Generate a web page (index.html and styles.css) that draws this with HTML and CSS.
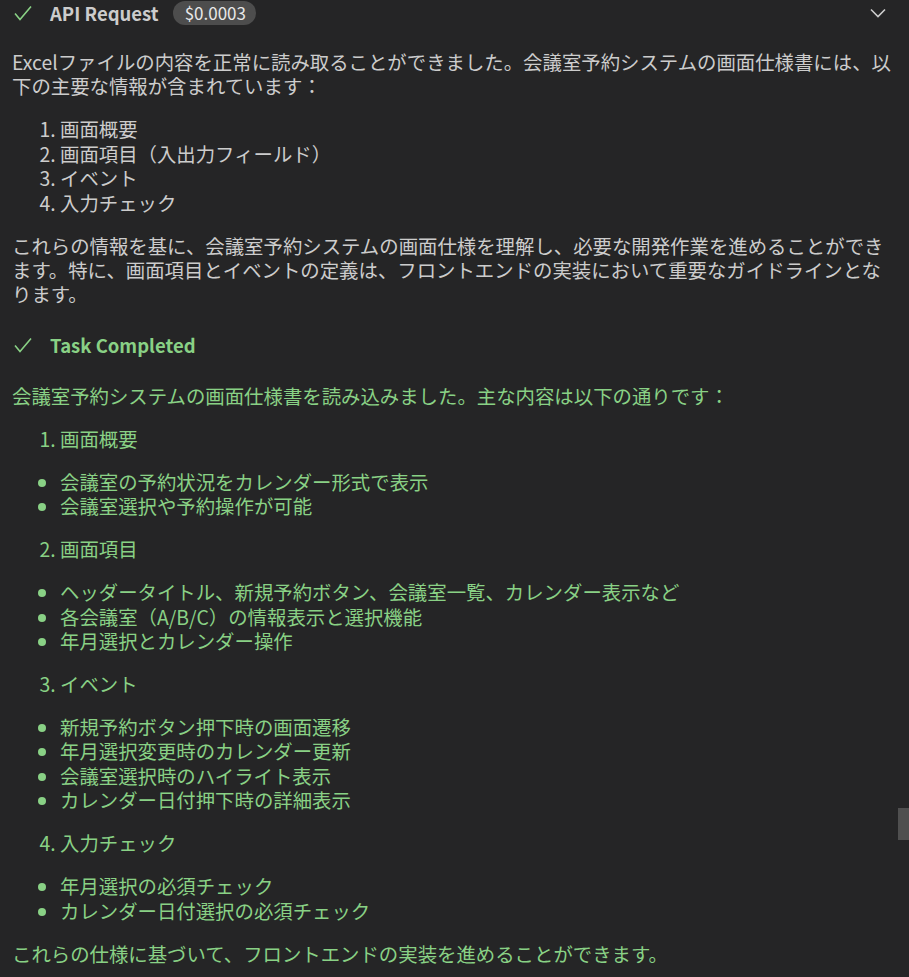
FILE: index.html
```html
<!DOCTYPE html>
<html lang="ja">
<head>
<meta charset="utf-8">
<link rel="stylesheet" href="styles.css">
</head>
<body>
<div class="view">
  <div class="head">
    <svg class="check" viewBox="0 0 18 16" width="18" height="16"><polyline points="1,8.5 6,14.5 17,1.5" fill="none" stroke="#89d185" stroke-width="1.6" stroke-linejoin="miter"/></svg>
    <span class="title">API Request</span>
    <span class="badge">$0.0003</span>
    <svg class="chev" viewBox="0 0 16 10" width="16" height="10"><polyline points="1,1.5 8,8.5 15,1.5" fill="none" stroke="#cccccc" stroke-width="1.6"/></svg>
  </div>
  <div class="md">
    <p>Excelファイルの内容を正常に読み取ることができました。会議室予約システムの画面仕様書には、以下の主要な情報が含まれています：</p>
    <ol>
      <li>画面概要</li>
      <li>画面項目（入出力フィールド）</li>
      <li>イベント</li>
      <li>入力チェック</li>
    </ol>
    <p>これらの情報を基に、会議室予約システムの画面仕様を理解し、必要な開発作業を進めることができます。特に、画面項目とイベントの定義は、フロントエンドの実装において重要なガイドラインとなります。</p>
  </div>
  <div class="head head-done">
    <svg class="check" viewBox="0 0 18 16" width="18" height="16"><polyline points="1,8.5 6,14.5 17,1.5" fill="none" stroke="#89d185" stroke-width="1.6"/></svg>
    <span class="title title-done">Task Completed</span>
  </div>
  <div class="md md-done">
    <p>会議室予約システムの画面仕様書を読み込みました。主な内容は以下の通りです：</p>
    <ol start="1"><li>画面概要</li></ol>
    <ul>
      <li>会議室の予約状況をカレンダー形式で表示</li>
      <li>会議室選択や予約操作が可能</li>
    </ul>
    <ol start="2"><li>画面項目</li></ol>
    <ul>
      <li>ヘッダータイトル、新規予約ボタン、会議室一覧、カレンダー表示など</li>
      <li>各会議室（A/B/C）の情報表示と選択機能</li>
      <li>年月選択とカレンダー操作</li>
    </ul>
    <ol start="3"><li>イベント</li></ol>
    <ul>
      <li>新規予約ボタン押下時の画面遷移</li>
      <li>年月選択変更時のカレンダー更新</li>
      <li>会議室選択時のハイライト表示</li>
      <li>カレンダー日付押下時の詳細表示</li>
    </ul>
    <ol start="4"><li>入力チェック</li></ol>
    <ul>
      <li>年月選択の必須チェック</li>
      <li>カレンダー日付選択の必須チェック</li>
    </ul>
    <p>これらの仕様に基づいて、フロントエンドの実装を進めることができます。</p>
  </div>
  <div class="scroll-thumb"></div>
</div>
</body>
</html>
```
FILE: styles.css
```css
html, body {
  margin: 0;
  padding: 0;
  background: #252526;
}
body {
  width: 909px;
  height: 977px;
  overflow: hidden;
  font-family: "Noto Sans CJK JP", "Noto Sans", sans-serif;
  color: #cccccc;
}
.view {
  position: relative;
  height: 977px;
  padding: 0 11px 0 12px;
}
.head {
  display: flex;
  align-items: center;
  height: 26px;
  padding-left: 2px;
}
.check {
  flex: none;
  margin-right: 18px;
}
.title {
  font-weight: 700;
  font-size: 18.5px;
  color: #cccccc;
}
.title-done {
  color: #89d185;
}
.badge {
  margin-left: 14px;
  background: #4d4d4d;
  color: #e8e8e8;
  font-size: 17px;
  line-height: 24px;
  height: 24px;
  padding: 0 10px 0 12px;
  border-radius: 12px;
}
.chev {
  margin-left: auto;
  margin-right: 12px;
}
.md {
  margin-top: 24px;
  font-size: 19.4px;
  line-height: 24.4px;
}
.md p, .md ol, .md ul {
  margin: 0 0 18.6px;
}
.md > :last-child {
  margin-bottom: 0;
}
.md ol, .md ul {
  padding-left: 48px;
}
.head-done {
  margin-top: 25px;
}
.md-done {
  margin-top: 26px;
  color: #89d185;
}
.scroll-thumb {
  position: absolute;
  right: 0;
  top: 808px;
  width: 11px;
  height: 32px;
  background: #4f4f4f;
}
```
